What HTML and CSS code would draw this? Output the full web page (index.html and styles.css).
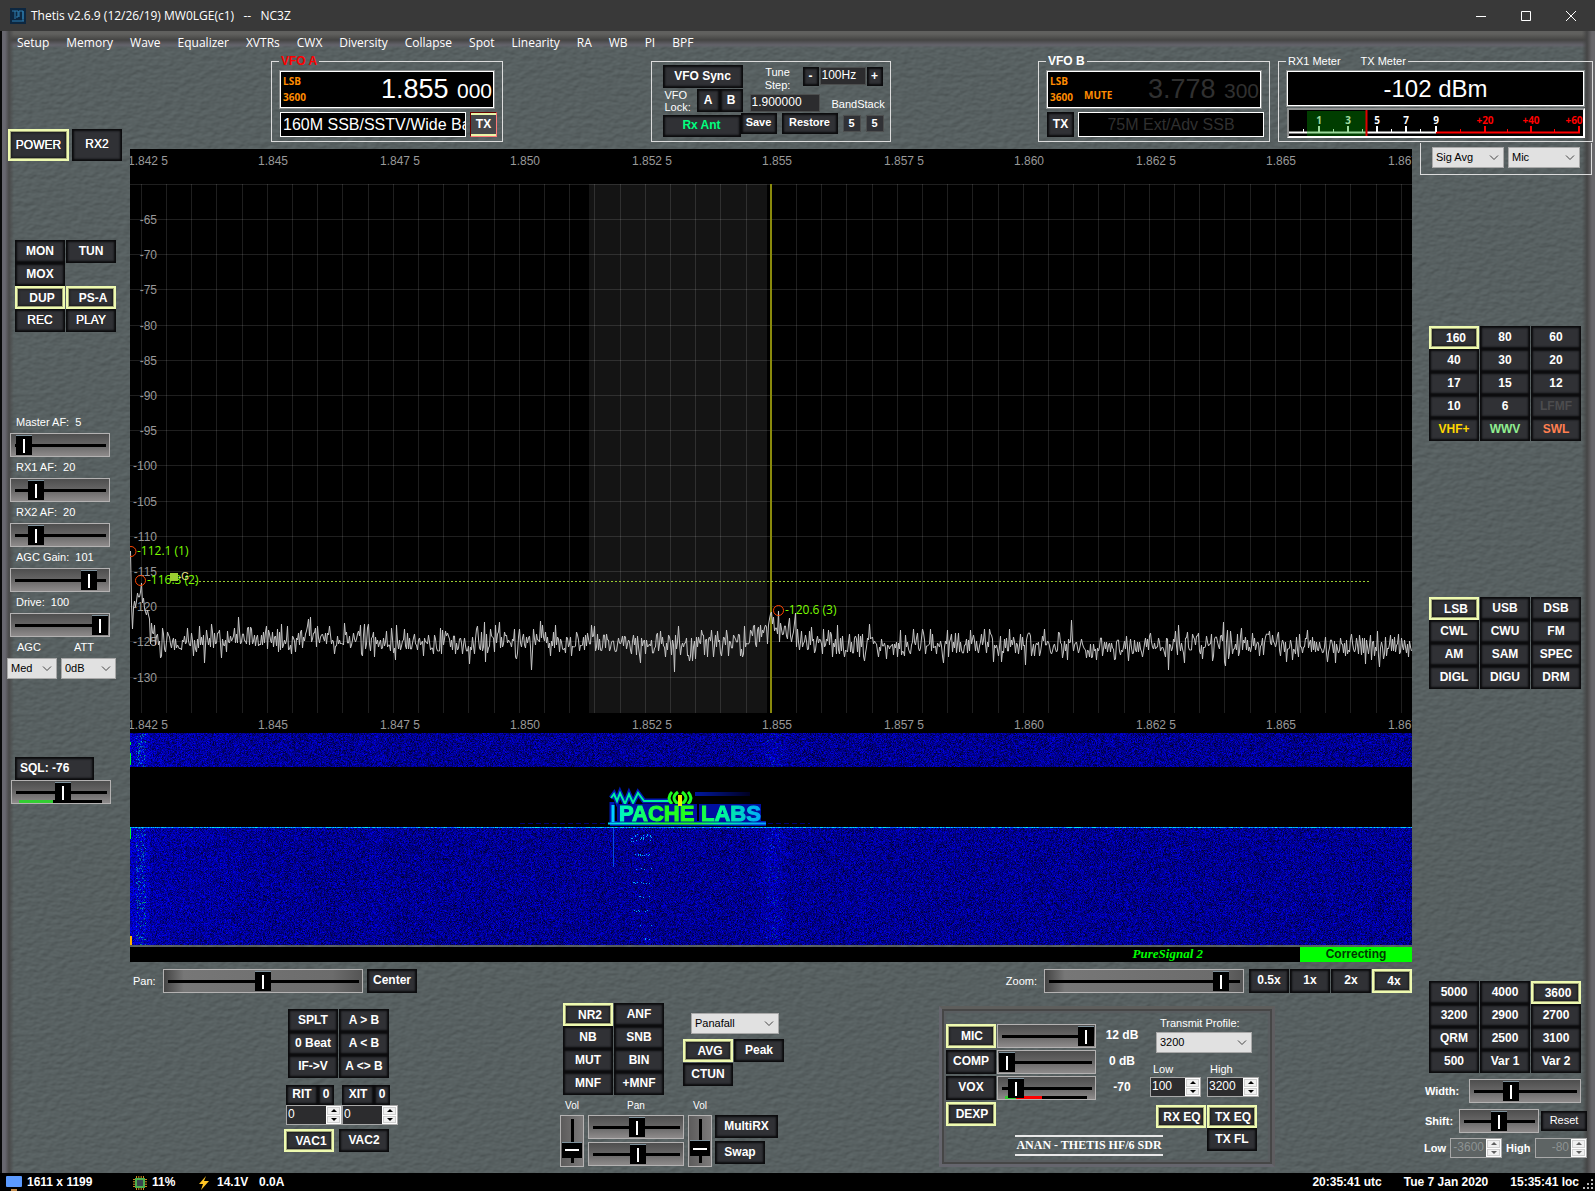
FILE: index.html
```html
<!DOCTYPE html>
<html lang="en">
<head>
<meta charset="utf-8">
<title>Thetis v2.6.9</title>
<link rel="stylesheet" href="styles.css">
</head>
<body>
<header class="titlebar">
  <svg class="app-icon" width="16" height="16" viewBox="0 0 16 16"><rect width="16" height="16" fill="#0d2740"/><path d="M2 3h3v8M5 3h3v6H6M9 9V3h4v8M2 13h12M13 3v10" fill="none" stroke="#2f7fb0" stroke-width="1"/></svg>
  <h1>Thetis v2.6.9 (12/26/19) MW0LGE(c1) &nbsp; -- &nbsp; NC3Z</h1>
  <div class="window-buttons">
    <button aria-label="Minimize"><svg width="10" height="10" viewBox="0 0 10 10"><path d="M0 5.5h10" stroke="#fff"/></svg></button>
    <button aria-label="Maximize"><svg width="10" height="10" viewBox="0 0 10 10"><path d="M.5.5h9v9h-9z" stroke="#fff" fill="none"/></svg></button>
    <button aria-label="Close"><svg width="10" height="10" viewBox="0 0 10 10"><path d="M0 0l10 10M10 0L0 10" stroke="#fff"/></svg></button>
  </div>
</header>

<main class="console">
  <nav class="menu">
    <a href="#">Setup</a><a href="#">Memory</a><a href="#">Wave</a><a href="#">Equalizer</a><a href="#">XVTRs</a><a href="#">CWX</a><a href="#">Diversity</a><a href="#">Collapse</a><a href="#">Spot</a><a href="#">Linearity</a><a href="#">RA</a><a href="#">WB</a><a href="#">PI</a><a href="#">BPF</a>
  </nav>

  <section class="left">
    <div class="power-row">
      <button class="btn thin on power">POWER</button>
      <button class="btn thin rx2">RX2</button>
    </div>
    <div class="keys two transmit-keys">
      <button class="btn">MON</button><button class="btn">TUN</button>
      <button class="btn">MOX</button><span></span>
      <button class="btn on">DUP</button><button class="btn on">PS-A</button>
      <button class="btn thin">REC</button><button class="btn thin">PLAY</button>
    </div>
    <div class="levels">
      <label for="af">Master AF:&nbsp; 5</label>
      <input class="slider" id="af" type="range" min="0" max="100" value="5">
      <label for="rx1af">RX1 AF:&nbsp; 20</label>
      <input class="slider" id="rx1af" type="range" min="0" max="100" value="20">
      <label for="rx2af">RX2 AF:&nbsp; 20</label>
      <input class="slider" id="rx2af" type="range" min="0" max="100" value="20">
      <label for="agcgain">AGC Gain:&nbsp; 101</label>
      <input class="slider" id="agcgain" type="range" min="-20" max="120" value="101">
      <label for="drive">Drive:&nbsp; 100</label>
      <input class="slider" id="drive" type="range" min="0" max="100" value="100">
    </div>
    <div class="agc">
      <label for="agc">AGC</label><label for="att">ATT</label>
      <select id="agc"><option>Med</option></select>
      <select id="att"><option>0dB</option></select>
    </div>
    <div class="squelch">
      <button class="btn">SQL: -76</button>
      <input class="slider" type="range" min="-160" max="0" value="-76" aria-label="Squelch">
    </div>
  </section>

  <section class="top">
    <fieldset class="group vfo">
      <legend class="red">VFO A</legend>
      <div class="readout">
        <div class="flags"><span>LSB</span><span>3600</span></div>
        <div class="freq">1.855 <small>000</small></div>
      </div>
      <div class="band-line">
        <input class="band-text" value="160M SSB/SSTV/Wide Band" aria-label="VFO A band">
        <button class="btn tx armed">TX</button>
      </div>
    </fieldset>

    <div class="group vfo-tools">
      <div class="tool-row one">
        <button class="btn sync">VFO Sync</button>
        <label for="step">Tune<br>Step:</label>
        <div class="stepper"><button class="btn">-</button><input id="step" class="field" value="100Hz"><button class="btn">+</button></div>
      </div>
      <div class="tool-row middle">
        <span class="lock">VFO<br>Lock:</span>
        <button class="btn">A</button><button class="btn">B</button>
        <input class="field stored" value="1.900000" aria-label="Saved frequency">
        <span class="stack-name">BandStack</span>
      </div>
      <div class="tool-row last">
        <button class="btn ant">Rx Ant</button><button class="btn small save">Save</button>
        <button class="btn small restore">Restore</button>
        <button class="btn small stack">5</button><button class="btn small stack">5</button>
      </div>
    </div>

    <div class="right-groups">
      <fieldset class="group vfo">
        <legend>VFO B</legend>
        <div class="readout dim">
          <div class="flags"><span>LSB</span><span>3600</span></div><span class="mute">MUTE</span>
          <div class="freq">3.778 <small>300</small></div>
        </div>
        <div class="band-line b">
          <button class="btn tx">TX</button>
          <input class="band-text dim" value="75M Ext/Adv SSB" aria-label="VFO B band">
        </div>
      </fieldset>
      <fieldset class="group meter">
        <legend><span>RX1 Meter</span><span>TX Meter</span></legend>
        <div class="dbm">-102 dBm</div>
        <svg class="smeter" viewBox="0 0 294 26">
          <rect width="294" height="26"/>
          <path d="M0 22.500h147" stroke="#fff" stroke-width="2"/>
          <path d="M147 22.500h144" stroke="red" stroke-width="2"/>
          <path d="M30 16v6M59 16v6M88 16v6M117 16v6M147 16v6" stroke="#fff" stroke-width="2"/>
          <path d="M14.500 19v3M44.500 19v3M73.500 19v3M102.500 19v3M131.500 19v3" stroke="#fff"/>
          <path d="M196 16v6M242 16v6M290 16v6" stroke="red" stroke-width="2"/>
          <path d="M171.500 19v3M218.500 19v3M265.500 19v3" stroke="red"/>
          <g class="scale"><text x="30" y="14">1</text><text x="59" y="14">3</text><text x="88" y="14">5</text><text x="117" y="14">7</text><text x="147" y="14">9</text><g fill="red"><text x="196" y="14">+20</text><text x="242" y="14">+40</text><text x="285" y="14">+60</text></g></g>
          <rect x="18" y="1" width="59" height="25" fill="#00a000" fill-opacity=".38"/>
          <path d="M77.500 0v26" stroke="#e00000" stroke-width="2"/>
        </svg>
      </fieldset>
    </div>
  </section>

  <section class="center">
    <svg id="panadapter" class="panadapter" viewBox="0 0 1282 584">
      <rect width="1282" height="584"/>
      <rect x="459" y="35" width="178" height="529" fill="#141414"/>
      <g id="grid" stroke="#fff" stroke-opacity=".12"></g>
      <g id="axis" class="axis"></g>
      <path d="M641 35v529" stroke="#8a8a0c" stroke-width="2"/>
      <polyline id="trace" fill="none" stroke="#c6c6c6"/>
      <path d="M65 432.500h1176" stroke="#9acd32" stroke-dasharray="2 2"/>
      <g class="peaks">
        <circle cx="1" cy="402.500" r="5"/><circle cx="10.500" cy="431.500" r="5"/><circle cx="648.500" cy="461.500" r="5"/>
        <text x="7" y="406">-112.1 (1)</text><text x="17" y="435">-116.3 (2)</text><text x="655" y="465">-120.6 (3)</text>
      </g>
      <rect x="40" y="424" width="8" height="8" fill="#9acd32"/>
      <text x="48" y="431" font-size="10" fill="#e8e88a">-G</text>
    </svg>
    <div class="waterfall">
      <canvas id="waterfall" width="1282" height="212"></canvas>
      <svg viewBox="0 0 1282 212">
        <defs>
          <linearGradient id="heat" gradientUnits="userSpaceOnUse" x1="478" y1="0" x2="632" y2="0">
            <stop offset="0" stop-color="#00d0ff"/><stop offset=".12" stop-color="#00ffa8"/><stop offset=".35" stop-color="#20ff20"/><stop offset=".57" stop-color="#20ff20"/><stop offset=".72" stop-color="#00ff90"/><stop offset="1" stop-color="#00a8ff"/>
          </linearGradient>
          <linearGradient id="wake" x1="0" x2="1"><stop offset="0" stop-color="#0018a0"/><stop offset="1" stop-color="#000020"/></linearGradient>
        </defs>
        <rect x="565" y="59" width="55" height="4" fill="url(#wake)"/>
        <path d="M390 90.500h90M630 90.500h50" stroke="#000070" stroke-dasharray="5 3"/>
        <g stroke="#0020e0" stroke-width="5" fill="none" opacity=".8"><path d="M482 69v20M480 90.500h156"/><path d="M481 65l3-4 3 7 3-8 5 11 4-10 4 9 5-10 6 8h26"/></g>
        <path d="M481 65l3-4 3 7 3-8 5 11 4-10 4 9 5-10 6 8h26" fill="none" stroke="#00f0a0" stroke-width="2"/>
        <path d="M548 59q-8 6 0 12M542 59q-6 6 0 12M552 59q8 6 0 12M558 59q6 6 0 12" fill="none" stroke="#20ff20" stroke-width="3"/>
        <path d="M483 72v17" stroke="#00d0ff" stroke-width="3"/>
        <g class="logo-glow" aria-hidden="true"><rect x="487" y="71" width="80" height="18"/><rect x="569" y="71" width="62" height="18"/></g>
        <g class="logo-text"><text x="489" y="88">PACHE</text><text x="571" y="88">LABS</text></g>
        <path d="M550 62v11" stroke="#e8f000" stroke-width="4"/>
        <path d="M478 90.500h158" stroke="url(#heat)" stroke-width="2"/>
      </svg>
    </div>
    <div class="signal-strip"><em>PureSignal 2</em><strong>Correcting</strong></div>

    <div class="pan-zoom">
      <div class="pan"><label for="pan">Pan:</label><input class="slider" id="pan" type="range" value="50"><button class="btn">Center</button></div>
      <div class="zoom"><label for="zoom">Zoom:</label><input class="slider" id="zoom" type="range" value="93">
        <div class="zoom-keys"><button class="btn">0.5x</button><button class="btn">1x</button><button class="btn">2x</button><button class="btn on">4x</button></div></div>
    </div>

    <div class="panels">
      <div class="vfo-ops">
        <div class="keys two">
          <button class="btn">SPLT</button><button class="btn">A &gt; B</button>
          <button class="btn">0 Beat</button><button class="btn">A &lt; B</button>
          <button class="btn">IF-&gt;V</button><button class="btn">A &lt;&gt; B</button>
        </div>
        <div class="offsets">
          <div><div class="offset-keys"><button class="btn">RIT</button><button class="btn">0</button></div>
            <div class="spin"><input value="0" aria-label="RIT offset"><span><button aria-label="RIT up"></button><button aria-label="RIT down"></button></span></div></div>
          <div><div class="offset-keys"><button class="btn">XIT</button><button class="btn">0</button></div>
            <div class="spin"><input value="0" aria-label="XIT offset"><span><button aria-label="XIT up"></button><button aria-label="XIT down"></button></span></div></div>
        </div>
        <div class="vac"><button class="btn on">VAC1</button><button class="btn">VAC2</button></div>
      </div>

      <div class="dsp">
        <div class="dsp-top">
          <div class="keys two">
            <button class="btn on">NR2</button><button class="btn">ANF</button>
            <button class="btn">NB</button><button class="btn">SNB</button>
            <button class="btn">MUT</button><button class="btn">BIN</button>
            <button class="btn">MNF</button><button class="btn">+MNF</button>
          </div>
          <div class="display-mode">
            <select aria-label="Display mode"><option>Panafall</option></select>
            <div class="keys two"><button class="btn on">AVG</button><button class="btn">Peak</button><button class="btn">CTUN</button></div>
          </div>
        </div>
        <div class="multi">
          <div class="stackcol"><label for="vol1">Vol</label><input class="slider vertical" id="vol1" type="range" value="22"></div>
          <div class="stackcol wide"><label for="pan1">Pan</label><input class="slider" id="pan1" type="range" value="51"><input class="slider" type="range" value="53" aria-label="Sub receiver pan"></div>
          <div class="stackcol"><label for="vol2">Vol</label><input class="slider vertical" id="vol2" type="range" value="28"></div>
          <div class="multi-keys"><button class="btn">MultiRX</button><button class="btn swap">Swap</button></div>
        </div>
      </div>

      <div class="tx-panel">
        <div class="tx-left">
          <div class="tx-row"><button class="btn on">MIC</button><input class="slider" type="range" value="100" aria-label="Mic gain"><output>12 dB</output></div>
          <div class="tx-row"><button class="btn">COMP</button><input class="slider" type="range" value="0" aria-label="Compression"><output>0 dB</output></div>
          <div class="tx-row"><button class="btn">VOX</button><input class="slider vox" type="range" value="12" aria-label="VOX level"><output>-70</output></div>
          <div class="tx-row"><button class="btn on">DEXP</button></div>
          <div class="brand">ANAN - THETIS HF/6 SDR</div>
        </div>
        <div class="tx-right">
          <label for="profile">Transmit Profile:</label>
          <select id="profile"><option>3200</option></select>
          <div class="tx-limits">
            <label for="txlow">Low</label><label for="txhigh">High</label>
            <div class="spin"><input id="txlow" value="100"><span><button aria-label="Low up"></button><button aria-label="Low down"></button></span></div>
            <div class="spin"><input id="txhigh" value="3200"><span><button aria-label="High up"></button><button aria-label="High down"></button></span></div>
          </div>
          <div class="keys two eq"><button class="btn on">RX EQ</button><button class="btn on">TX EQ</button><span></span><button class="btn">TX FL</button></div>
        </div>
      </div>
    </div>
  </section>

  <section class="right">
    <div class="meter-select">
      <select aria-label="RX meter"><option>Sig Avg</option></select>
      <select aria-label="TX meter"><option>Mic</option></select>
    </div>
    <div class="keys three bands">
      <button class="btn on">160</button><button class="btn">80</button><button class="btn">60</button>
      <button class="btn">40</button><button class="btn">30</button><button class="btn">20</button>
      <button class="btn">17</button><button class="btn">15</button><button class="btn">12</button>
      <button class="btn">10</button><button class="btn">6</button><button class="btn" disabled>LFMF</button>
      <button class="btn gold">VHF+</button><button class="btn green">WWV</button><button class="btn coral">SWL</button>
    </div>
    <div class="keys three modes">
      <button class="btn on">LSB</button><button class="btn">USB</button><button class="btn">DSB</button>
      <button class="btn">CWL</button><button class="btn">CWU</button><button class="btn">FM</button>
      <button class="btn">AM</button><button class="btn">SAM</button><button class="btn">SPEC</button>
      <button class="btn">DIGL</button><button class="btn">DIGU</button><button class="btn">DRM</button>
    </div>
    <div class="keys three filters">
      <button class="btn">5000</button><button class="btn">4000</button><button class="btn on">3600</button>
      <button class="btn">3200</button><button class="btn">2900</button><button class="btn">2700</button>
      <button class="btn">QRM</button><button class="btn">2500</button><button class="btn">3100</button>
      <button class="btn">500</button><button class="btn">Var 1</button><button class="btn">Var 2</button>
    </div>
    <div class="filter-row"><label for="width">Width:</label><input class="slider width" id="width" type="range" value="35"></div>
    <div class="filter-row"><label for="shift">Shift:</label><input class="slider shift" id="shift" type="range" value="50"><button class="btn reset">Reset</button></div>
    <div class="filter-row cut"><label for="flow">Low</label><div class="spin off"><input id="flow" value="-3600" disabled><span><button aria-label="Low cut up" disabled></button><button aria-label="Low cut down" disabled></button></span></div>
      <label for="fhigh">High</label><div class="spin off"><input id="fhigh" value="-80" disabled><span><button aria-label="High cut up" disabled></button><button aria-label="High cut down" disabled></button></span></div></div>
  </section>
</main>

<footer class="status">
  <svg width="18" height="16" viewBox="0 0 18 16"><rect x="1" y="1" width="16" height="11" rx="1" fill="#5c9bff"/><path d="M6 14h6v2H6z" fill="#c08a4a"/></svg>
  <span class="size">1611 x 1199</span>
  <svg width="14" height="14" viewBox="0 0 14 14"><path d="M3.500 0v14M5.800 0v14M8.200 0v14M10.500 0v14M0 3.500h14M0 5.800h14M0 8.200h14M0 10.500h14" stroke="#d08a20"/><rect x="2" y="2" width="10" height="10" fill="#4caf50"/><rect x="4" y="4" width="6" height="6" fill="#37474f"/></svg>
  <span class="cpu">11%</span>
  <svg width="12" height="14" viewBox="0 0 12 14"><path d="M8 0L1 8h4l-2 6 8-9H6z" fill="#ffc524"/></svg>
  <span class="volts">14.1V</span><span>0.0A</span>
  <span class="utc">20:35:41 utc</span><span class="date">Tue 7 Jan 2020</span><span class="local">15:35:41 loc</span>
  <svg class="grip" width="14" height="14" viewBox="0 0 14 14"><path d="M10 1h2v2h-2zM10 5h2v2h-2zM10 9h2v2h-2zM6 5h2v2H6zM6 9h2v2H6zM2 9h2v2H2z" fill="#b8b8b8"/></svg>
</footer>
<script src="scope.js"></script>
</body>
</html>
```
FILE: styles.css
```css
* { box-sizing: border-box; }
body {
  margin: 0; min-height: 100vh; display: flex; flex-direction: column;
  background: #000; color: #fff;
  font: 11px/13px "Liberation Sans", Arial, sans-serif;
}
button, input, select { font: inherit; color: inherit; margin: 0; padding: 0; border: 0; border-radius: 0; min-width: 0; }

.titlebar { height: 31px; display: flex; align-items: center; padding: 0 2px 0 10px; background: #393939; }
.titlebar h1 { flex: 1; margin: 0 0 0 5px; font: 12px/16px "Open Sans", "Noto Sans", sans-serif; }
.window-buttons { display: flex; }
.window-buttons button { width: 45px; height: 31px; background: none; display: grid; place-items: center; }

.console {
  flex: 1; display: grid;
  grid-template-columns: 130px minmax(0, 1fr) 183px;
  grid-template-rows: 23px 89px auto;
  background:
    linear-gradient(to right, #0a0a0a 0 2px, #68676f 2px 5px, #4a4a4a 9px, rgba(74,74,74,0) 14px) left/14px 100% no-repeat,
    linear-gradient(to left, #68676a 0 3px, #454545 8px, rgba(69,69,69,0) 13px) right/13px 100% no-repeat,
    linear-gradient(#60605e 0 3px, #444443 9px, #64636b 14px, rgba(100,99,107,0) 17px) top/100% 17px no-repeat,
    url("data:image/svg+xml,%3Csvg xmlns='http://www.w3.org/2000/svg' width='320' height='320'%3E%3Cfilter id='t' x='0' y='0' width='1' height='1' color-interpolation-filters='sRGB'%3E%3CfeTurbulence type='fractalNoise' baseFrequency='.13 .22' numOctaves='2' seed='4' stitchTiles='stitch'/%3E%3CfeDiffuseLighting surfaceScale='.5' lighting-color='%23656f70'%3E%3CfeDistantLight azimuth='240' elevation='60'/%3E%3C/feDiffuseLighting%3E%3C/filter%3E%3Crect width='320' height='320' filter='url(%23t)'/%3E%3C/svg%3E") #586162;
}
.menu { grid-column: 1 / -1; display: flex; gap: 17px; padding: 4px 0 0 17px; font: 12px/16px "Open Sans", "Noto Sans", sans-serif; }
.menu a { color: #fff; text-decoration: none; }
.left { grid-column: 1; grid-row: 2 / 4; padding: 75px 0 0 8px; }
.top { grid-column: 2 / 4; grid-row: 2; display: flex; justify-content: space-between; align-items: flex-start; padding: 0 2px 0 141px; }
.center { grid-column: 2; grid-row: 3; padding: 6px 0 4px; }
.right { grid-column: 3; grid-row: 3; padding-left: 8px; }

/* push buttons */
.btn {
  height: 23px; padding: 0 0 2px; text-align: center; white-space: nowrap;
  font: bold 12px/14px "Liberation Sans", Arial, sans-serif; color: #fff;
  background: #303135; box-shadow: inset 0 0 2px 2px #0b0b0d;
}
.btn.on { border: 2px solid #eefab0; padding: 0 0 0 4px; box-shadow: inset 0 0 0 1px #a3a878, inset 0 0 2px 2px #1c1c1e; }
.btn.thin { font-weight: 400; text-shadow: 0 0 #fff; }
.btn.small { font-size: 11px; height: 21px; padding-bottom: 4px; }
.btn:disabled { color: #4c4c4e; }
.btn.gold { color: #ffd700; }
.btn.green { color: #90ee90; }
.btn.coral { color: #ff7f50; }
.keys { display: grid; gap: 0 1px; }
.keys.two { grid-template-columns: 50px 50px; }
.keys.three { grid-template-columns: 50px 50px 50px; margin-left: 9px; }

/* sliders */
.slider {
  -webkit-appearance: none; appearance: none; display: block; width: 100px; height: 24px; padding: 1px;
  border: 1px solid #b4b2b2; background: linear-gradient(#4e4e4e, #6a6969 55%, #8e8b8b);
}
.slider::-webkit-slider-runnable-track { height: 20px; background: linear-gradient(#000, #000) center/calc(100% - 5px) 3px no-repeat; }
.slider::-webkit-slider-thumb {
  -webkit-appearance: none; width: 16px; height: 20px; border-top: 1px solid #7d919c;
  background: linear-gradient(#fff, #fff) center/2px 14px no-repeat #000;
}
.slider.vertical { writing-mode: vertical-lr; direction: rtl; width: 24px; height: 52px; background: linear-gradient(to right, #5c5b5b, #7d7b7b); }
.slider.vertical::-webkit-slider-runnable-track { width: 20px; height: 100%; background: linear-gradient(#000, #000) center/3px calc(100% - 4px) no-repeat; }
.slider.vertical::-webkit-slider-thumb { width: 20px; height: 16px; background: linear-gradient(#fff, #fff) center/14px 2px no-repeat #000; }

select {
  -webkit-appearance: none; appearance: none; height: 21px; padding-left: 3px; color: #000; border: 1px solid #a9a9a9;
  background: url("data:image/svg+xml,%3Csvg xmlns='http://www.w3.org/2000/svg' width='10' height='6'%3E%3Cpath d='M1 .500l4 4 4-4' fill='none' stroke='%23444'/%3E%3C/svg%3E") right 4px center no-repeat #e1e1e1;
}
.spin { display: flex; height: 20px; border: 1px solid #a9a9a9; background: #2c2c2e; }
.spin input { flex: 1; width: 0; padding: 0 0 2px 1px; background: none; font-size: 12px; }
.spin span { display: grid; width: 15px; background: #fff; gap: 1px; padding: 1px; }
.spin button { border: 1px solid #d0d0d0; display: grid; place-items: center; background: #f0f0f0; }
.spin button::after { content: ""; border: 3px solid transparent; border-top-width: 0; border-bottom-color: #000; }
.spin button:last-child::after { border: 3px solid transparent; border-bottom-width: 0; border-top-color: #000; }
.spin.off { background: #5e6464; color: #8d9292; }
.spin.off input { text-align: right; padding-right: 2px; }
.spin.off button::after { opacity: .6; }

/* left column */
.power-row { display: flex; gap: 3px; }
.power-row .btn { height: 32px; }
.btn.power { width: 61px; padding-left: 0; }
.rx2 { width: 50px; }
.transmit-keys { margin: 79px 0 0 7px; }
.levels { margin: 80px 0 0 2px; }
.levels label { display: block; height: 21px; line-height: 20px; padding-left: 6px; }
.agc { display: grid; grid-template-columns: 50px 55px; column-gap: 4px; margin-left: -1px; }
.agc label { line-height: 21px; padding-left: 10px; }
.agc label + label { padding-left: 13px; }
.squelch { margin: 78px 0 0 3px; }
.squelch .btn { display: block; width: 79px; margin-left: 4px; padding-left: 5px; text-align: left; }
.squelch .slider { background: linear-gradient(#32cd32, #32cd32) 7px 19px/34px 3px no-repeat, linear-gradient(#000, #000) 7px 19px/83px 3px no-repeat, linear-gradient(#4e4e4e, #6a6969 55%, #8e8b8b); }

/* top strip */
.group { border: 1px solid #dcdcdc; margin: 0; min-width: 0; }
legend { font: bold 12px/15px "Liberation Sans", Arial, sans-serif; padding: 0 2px; margin-left: -1px; }
.red { color: red; }
.vfo { width: 232px; height: 88px; padding: 2px 8px 0; }
.readout { width: 214px; height: 37px; display: flex; align-items: center; background: #000; border: 1px solid #fff; box-shadow: 0 0 0 1px #8a8e8e; padding: 0 1px 0 2px; }
.flags { width: 34px; display: grid; gap: 3px; font: bold 10px/13px "Open Sans", sans-serif; color: #ff8c00; }
.mute { color: #ff8c00; font: bold 10px/13px "Open Sans", sans-serif; padding-top: 12px; }
.freq { margin-left: auto; font-size: 27px; line-height: 34px; white-space: nowrap; }
.freq small { font-size: 21px; margin-left: 1px; }
.dim .freq, .band-text.dim { color: #303030; }
.band-line { display: flex; gap: 4px; margin-top: 4px; width: 217px; }
.band-text { width: 186px; height: 25px; font-size: 16px; padding-left: 2px; background: #000; border: 1px solid #fff; }
.band-text.dim { text-align: center; padding: 0; }
.tx { flex: 1; height: 25px; }
.armed { border: 1px solid #ff7a7a; border-left-color: #600; border-top-color: #600; background: #46474a; box-shadow: inset 0 2px #e8f5a8, inset 0 -2px #e8f5a8; }
.vfo-tools { width: 240px; height: 81px; margin-top: 7px; padding: 3px 0 0 11px; }
.tool-row { display: flex; height: 24px; }
.tool-row.last { align-items: flex-start; }
.sync { width: 80px; }
.one label { width: 60px; padding: 1px 0 0 10px; text-align: center; }
.stepper { display: flex; gap: 1px; padding-top: 2px; }
.stepper .btn { width: 16px; height: 19px; }
.field { width: 46px; height: 18px; padding: 0 0 2px 1px; background: #2c2c2e; border: 1px solid #4c4e4e; font-size: 12px; }
.lock { width: 34px; padding-left: 2px; line-height: 12px; }
.middle .btn { width: 23px; }
.stored { width: 70px; margin: 5px 0 0 7px; }
.stack-name { padding: 9px 0 0 12px; }
.ant { width: 78px; height: 22px; margin-top: 2px; color: #00ff7f; }
.save { width: 36px; }
.restore { width: 56px; margin-left: 5px; }
.small.stack { width: 18px; height: 17px; margin: 2px 0 0 5px; padding-bottom: 1px; box-shadow: none; border: 1px solid #4c4e4e; }
.right-groups { display: flex; gap: 8px; }
.meter { width: 315px; height: 88px; padding: 2px 8px 0; }
.meter legend { font-weight: 400; font-size: 11px; display: flex; gap: 20px; }
.dbm { height: 35px; background: #000; border: 1px solid #fff; box-shadow: 0 0 0 1px #8a8e8e; text-align: center; font-size: 24px; line-height: 33px; }
.smeter { display: block; width: 298px; height: 30px; margin-top: 2px; border: 2px solid; border-color: #8c8e8e #fff #fff #8c8e8e; }
.scale { fill: #fff; font: bold 10px "Open Sans", sans-serif; text-anchor: middle; }

/* panadapter */
.panadapter { display: block; width: 100%; }
.axis { fill: #999; font-size: 12px; white-space: pre; }
.peaks { fill: #7cfc00; font: 12px "Open Sans", sans-serif; }
.peaks circle { fill: none; stroke: #ff4500; }
.waterfall { position: relative; }
.waterfall canvas { display: block; width: 100%; }
.waterfall svg { position: absolute; inset: 0; width: 100%; }
.logo-glow { fill: #0010a0; }
.logo-text { font: bold 22px "Liberation Sans", Arial, sans-serif; fill: url(#heat); stroke: url(#heat); stroke-width: 1px; }
.signal-strip { display: flex; justify-content: flex-end; margin-top: 2px; height: 15px; background: #000; line-height: 15px; }
.signal-strip em { font: italic bold 13px/14px "Liberation Serif", serif; color: #0f0; margin-right: 97px; }
.signal-strip strong { width: 112px; background: #0f0; color: #003800; text-align: center; font-size: 12px; }

.pan-zoom { display: flex; justify-content: space-between; margin-top: 7px; height: 24px; }
.pan, .zoom { display: flex; align-items: center; gap: 4px; }
.pan label { padding-left: 3px; width: 29px; }
.zoom label { padding-right: 3px; }
.pan-zoom .slider { width: 200px; background: linear-gradient(to right, #444, #777 10%, #6c6c6c 85%, #555); }
.pan .btn { width: 50px; height: 24px; }
.zoom-keys { display: grid; grid-template-columns: repeat(4, 40px); gap: 1px; margin-left: 1px; }
.zoom-keys .btn { height: 24px; }
.panels { display: flex; justify-content: space-between; align-items: flex-start; padding: 10px 137px 0 154px; }

.vfo-ops { width: 121px; padding-top: 6px; }
.vfo-ops .keys { margin-left: 4px; }
.offsets { display: flex; margin: 7px 0 4px 2px; }
.offsets .spin { width: 56px; }
.offset-keys { display: flex; }
.offset-keys .btn { height: 20px; width: 32px; }
.offset-keys .btn + .btn { width: 16px; }
.vac { display: flex; gap: 5px; }
.vac .btn { width: 50px; }

.dsp { width: 224px; }
.dsp-top { display: flex; gap: 19px; padding-left: 3px; }
.display-mode { padding-top: 10px; }
.display-mode select { width: 88px; margin: 0 0 5px 8px; display: block; }
.display-mode .keys { row-gap: 1px; }
.multi { display: flex; gap: 4px; margin-top: 3px; }
.stackcol { width: 24px; font-size: 10px; }
.stackcol label { display: block; height: 17px; line-height: 15px; text-align: center; }
.stackcol.wide { width: 96px; }
.stackcol.wide .slider { width: 96px; margin-bottom: 3px; }
.multi-keys { display: grid; gap: 3px; align-content: start; padding-top: 17px; margin-left: -1px; }
.multi-keys .btn { width: 63px; }
.multi-keys .swap { width: 50px; }

.tx-panel {
  width: 336px; height: 161px; margin-top: 3px; display: flex; padding: 8px 4px 0;
  border: 3px solid; border-color: #5e5e5c #5e5d60 #65656d #65656d;
  box-shadow: inset 0 0 0 2px #464646, inset 0 0 2px 4px #5a5d60;
}
.tx-left { width: 204px; padding-top: 7px; display: grid; gap: 2px; align-content: start; }
.tx-row { display: flex; gap: 1px; height: 24px; }
.tx-row .btn { width: 50px; height: 24px; }
.tx-row .btn.on { padding-left: 2px; }
.tx-row .slider { width: 99px; }
.tx-row output { width: 50px; font: bold 12px/22px "Liberation Sans", Arial, sans-serif; text-align: center; }
.vox { background: linear-gradient(#32cd32, #32cd32) 7px 19px/11px 3px no-repeat, linear-gradient(red, red) 18px 19px/26px 3px no-repeat, linear-gradient(#000, #000) 7px 19px/82px 3px no-repeat, linear-gradient(#4e4e4e, #6a6969 55%, #8e8b8b); }
.brand { margin: 7px 0 0 69px; width: 148px; text-align: center; white-space: nowrap; font: bold 12px/17px "Liberation Serif", serif; border: solid #e8e8e8; border-width: 2px 0; }
.tx-right { width: 109px; }
.tx-right > label { display: block; height: 15px; padding-left: 10px; }
.tx-right > select { width: 96px; display: block; margin-left: 6px; }
.tx-limits { display: grid; grid-template-columns: 51px 52px; column-gap: 6px; margin-top: 8px; }
.tx-limits label { line-height: 16px; padding-left: 3px; }
.eq { margin: 8px 0 0 6px; }
.eq .btn.on { padding-left: 2px; }

/* right column */
.meter-select { display: flex; gap: 4px; width: 172px; height: 32px; padding: 4px 0 0 11px; border: 1px solid #dcdcdc; border-top: 0; }
.meter-select select { width: 72px; }
.bands { margin-top: 151px; }
.modes { margin-top: 156px; }
.filters { margin-top: 292px; }
.filter-row { display: flex; align-items: center; height: 24px; margin-top: 6px; padding-left: 5px; }
.filter-row label { font-weight: 700; font-size: 11px; width: 35px; }
.filter-row .width { width: 112px; margin-left: 9px; }
.filter-row .shift { width: 80px; margin-left: -1px; }
.reset { width: 46px; height: 20px; margin-left: 2px; font-weight: 400; font-size: 11px; }
.cut { padding-left: 4px; margin-top: 3px; }
.cut label { width: 26px; }
.cut .spin { width: 52px; }
.cut .spin + label { width: 29px; margin-left: 4px; }

.status { display: flex; align-items: center; height: 20px; padding-left: 5px; background: #000; font: bold 12px/18px "Liberation Sans", Arial, sans-serif; }
.status span { padding-bottom: 2px; }
.status .size { width: 110px; padding-left: 4px; }
.status .cpu { width: 51px; padding-left: 5px; }
.status .volts { width: 49px; padding-left: 7px; }
.utc { margin-left: auto; }
.date { margin: 0 22px; }
.grip { margin: 4px 0 0 2px; }
```
FILE: scope.js
```js
// Seeded generator, so the band noise is the same on every load
let seed = 20200107;
function rnd() {
  seed = (seed * 1664525 + 1013904223) >>> 0;
  return seed / 4294967296;
}
const NS = 'http://www.w3.org/2000/svg';
function add(parent, tag, attrs, text) {
  const el = document.createElementNS(NS, tag);
  for (const k in attrs) el.setAttribute(k, attrs[k]);
  if (text) el.textContent = text;
  parent.appendChild(el);
}

const grid = document.getElementById('grid');
const axis = document.getElementById('axis');
for (let i = 0; i <= 50; i++) {
  const x = Math.floor(11.3 + i * 25.2) + 0.5;
  add(grid, 'line', { x1: x, x2: x, y1: 35, y2: 564 });
}
for (let i = 0; i < 15; i++) {
  const y = Math.floor(35.2 + i * 35.2) + 0.5;
  add(grid, 'line', { x1: 0, x2: 1282, y1: y, y2: y });
  if (i) add(axis, 'text', { x: 27, y: y + 4, 'text-anchor': 'end' }, String(-60 - i * 5));
}
for (let i = 0; i < 11; i++) {
  const half = i % 2 === 0;
  const khz = 18425 + i * 25;
  const s = '1.' + String(khz).slice(1, 4) + (half ? ' 5' : '');
  const x = Math.round(11.3 + i * 126 - (half ? 13 : 9));
  add(axis, 'text', { x: x, y: 16 }, s);
  add(axis, 'text', { x: x, y: 580 }, s);
}

const points = ['0.5,402', '1.5,455', '2.5,480'];
for (let x = 3; x < 1282; x++) {
  let y = 490 + 7 * Math.min(1, x / 900) + 2 * Math.sin(x / 37);
  if (x < 30) y -= 34 * Math.exp(-((x - 11) ** 2) / 60) + 14 * (1 - x / 30);
  y -= 24 * Math.exp(-Math.abs(x - 644) / 14);
  y += (rnd() + rnd() + rnd() - 1.5) * 15;
  if (rnd() < 0.03) y += rnd() < 0.5 ? 14 : -14;
  if (x === 11) y = 434;
  if (x === 648) y = 462;
  points.push((x + 0.5) + ',' + Math.round(y));
}
document.getElementById('trace').setAttribute('points', points.join(' '));

const ctx = document.getElementById('waterfall').getContext('2d');
const img = ctx.createImageData(1282, 212);
for (let y = 0; y < 212; y++) {
  for (let x = 0; x < 1282; x++) {
    const p = (y * 1282 + x) * 4;
    img.data[p + 3] = 255;
    if (y >= 34 && y < 94) continue;
    let b = 142 + (rnd() + rnd() - 1) * 105;
    b += 30 * Math.exp(-((x - 643) ** 2) / 150) + 12 * Math.exp(-((x - 245) ** 2) / 60);
    b += x < 20 ? 45 : Math.max(0, 22 - x / 8);
    let g = 0;
    if (x > 5 && x < 16 && rnd() < 0.2) g = 40 + rnd() * 110;
    if (x > 635 && x < 652 && rnd() < 0.03) g = 80;
    if (x === 483 && y > 94 && y < 134) { g = 80; b = 230; }
    if (x > 500 && x < 522 && y > 100 && (y - 107) % 14 < 2 && rnd() < 0.12) { g = 170; b = 255; }
    if (y === 94) { g = 60 + rnd() * 180; b = 255; }
    if (x === 0 && ((y > 19 && y < 32) || (y > 94 && y < 106) || (y > 8 && y < 12))) { g = 255; b = 40; }
    img.data[p + 1] = g;
    img.data[p + 2] = b;
    if (x < 2 && y > 202) { img.data[p] = 255; img.data[p + 1] = 180; img.data[p + 2] = 0; }
  }
}
ctx.putImageData(img, 0, 0);
```
